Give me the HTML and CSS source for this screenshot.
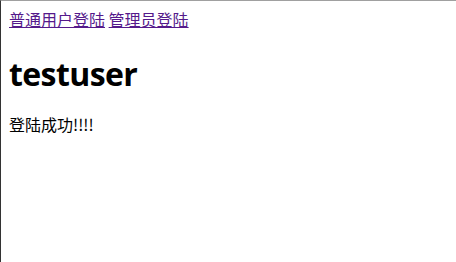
FILE: index.html
```html
<!DOCTYPE html>
<html lang="zh-CN">
<head>
    <meta charset="UTF-8">
    <title>登陆成功</title>
    <link rel="stylesheet" href="styles.css">
</head>
<body>
    <div class="page">
        <div class="nav">
            <a href="#" class="nav-link">普通用户登陆</a>
            <a href="#" class="nav-link">管理员登陆</a>
        </div>
        <h1 class="username">testuser</h1>
        <p class="message">登陆成功!!!!</p>
    </div>
</body>
</html>
```

FILE: styles.css
```css
* {
    box-sizing: border-box;
}

html, body {
    margin: 0;
    padding: 0;
    height: 100%;
}

body {
    font-family: "Noto Sans CJK SC", "Open Sans", sans-serif;
    font-size: 16px;
    color: #000;
    background: #fff;
}

.page {
    min-height: 100%;
    border-top: 1px solid #a0a0a0;
    border-left: 1px solid #333;
    padding: 8px 8px;
}

.nav {
    line-height: 21px;
}

.nav-link {
    color: #551a8b;
}

.username {
    font-family: "Open Sans", "Noto Sans CJK SC", sans-serif;
    font-size: 32px;
    font-weight: bold;
    letter-spacing: -0.6px;
    margin: 23px 0 19px;
    line-height: 42px;
}

.message {
    margin: 16px 0;
    line-height: 21px;
}
```
